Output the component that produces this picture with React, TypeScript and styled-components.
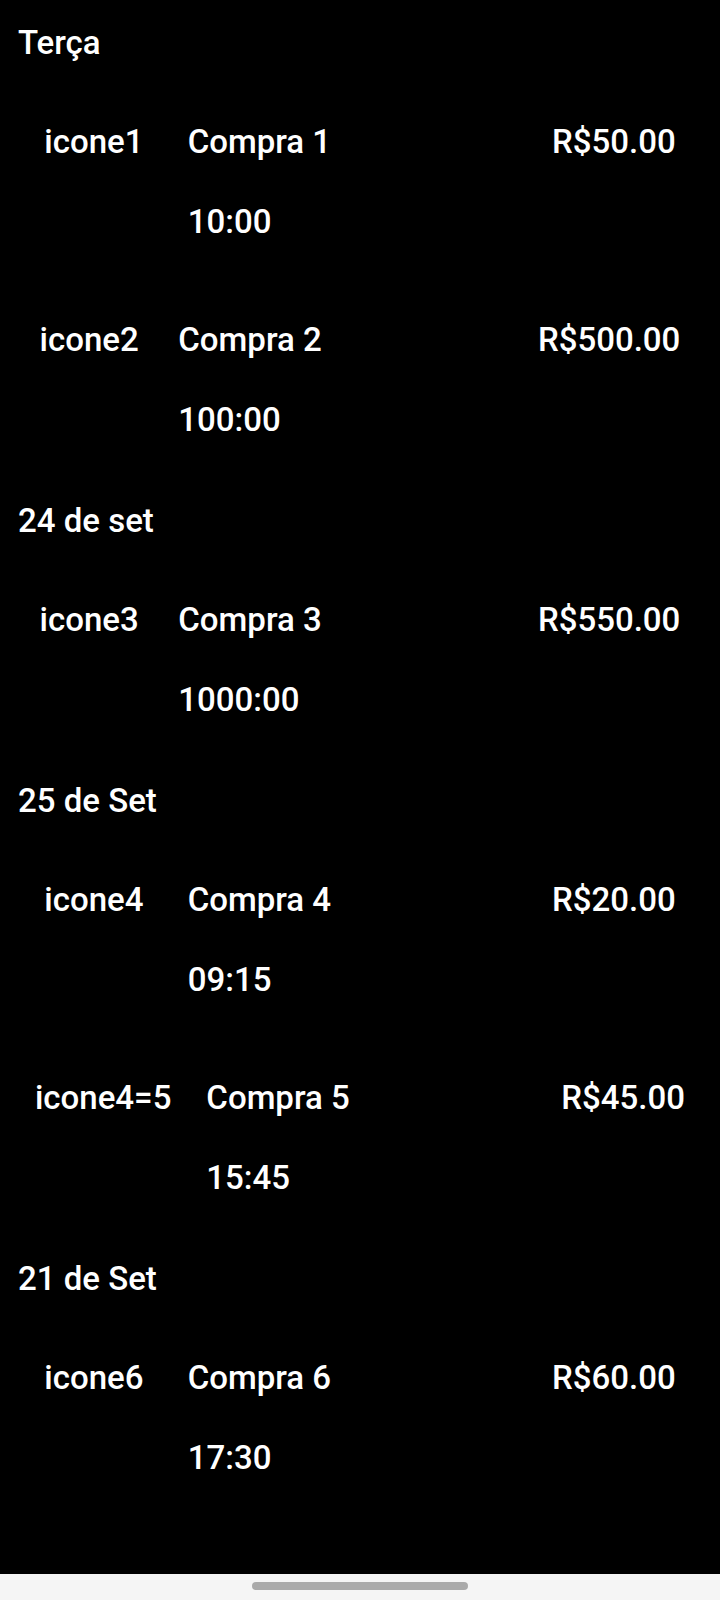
import React from "react";
import styled, { createGlobalStyle } from "styled-components";

const GlobalStyle = createGlobalStyle`
  html, body {
    margin: 0;
    padding: 0;
    background: #000;
  }
  body {
    font-family: Roboto, "Noto Sans", "Liberation Sans", sans-serif;
    color: #fff;
  }
  * { box-sizing: border-box; }
`;

const Screen = styled.div`
  width: 720px;
  height: 1600px;
  display: flex;
  flex-direction: column;
  background: #000;
`;

const List = styled.div`
  flex: 1;
  display: flex;
  flex-direction: column;
  padding-top: 1px;
`;

const Text = styled.div`
  font-size: 33px;
  font-weight: 500;
  line-height: 40px;
  color: #fff;
  white-space: nowrap;
`;

const SectionTitle = styled(Text)`
  padding: 22px 18px 20px;
`;

const Row = styled.div`
  display: flex;
  justify-content: space-evenly;
  align-items: flex-start;
  padding: 39px 0;
`;

const IconLabel = styled(Text)``;

const Info = styled.div`
  width: 320px;
  display: flex;
  flex-direction: column;
  gap: 40px;
`;

const Price = styled(Text)``;

const NavBar = styled.div`
  height: 26px;
  background: #f5f5f5;
  display: flex;
  justify-content: center;
  padding-top: 8px;
`;

const Handle = styled.div`
  width: 216px;
  height: 8px;
  border-radius: 4px;
  background: #aaaaaa;
`;

type Purchase = { icon: string; title: string; time: string; price: string };
type Section = { title: string; items: Purchase[] };

const sections: Section[] = [
  {
    title: "Terça",
    items: [
      { icon: "icone1", title: "Compra 1", time: "10:00", price: "R$50.00" },
      { icon: "icone2", title: "Compra 2", time: "100:00", price: "R$500.00" },
    ],
  },
  {
    title: "24 de set",
    items: [
      { icon: "icone3", title: "Compra 3", time: "1000:00", price: "R$550.00" },
    ],
  },
  {
    title: "25 de Set",
    items: [
      { icon: "icone4", title: "Compra 4", time: "09:15", price: "R$20.00" },
      { icon: "icone4=5", title: "Compra 5", time: "15:45", price: "R$45.00" },
    ],
  },
  {
    title: "21 de Set",
    items: [
      { icon: "icone6", title: "Compra 6", time: "17:30", price: "R$60.00" },
    ],
  },
];

export default function App() {
  return (
    <>
      <GlobalStyle />
      <Screen>
        <List>
          {sections.map((s) => (
            <React.Fragment key={s.title}>
              <SectionTitle>{s.title}</SectionTitle>
              {s.items.map((p) => (
                <Row key={p.title}>
                  <IconLabel>{p.icon}</IconLabel>
                  <Info>
                    <Text>{p.title}</Text>
                    <Text>{p.time}</Text>
                  </Info>
                  <Price>{p.price}</Price>
                </Row>
              ))}
            </React.Fragment>
          ))}
        </List>
        <NavBar>
          <Handle />
        </NavBar>
      </Screen>
    </>
  );
}
